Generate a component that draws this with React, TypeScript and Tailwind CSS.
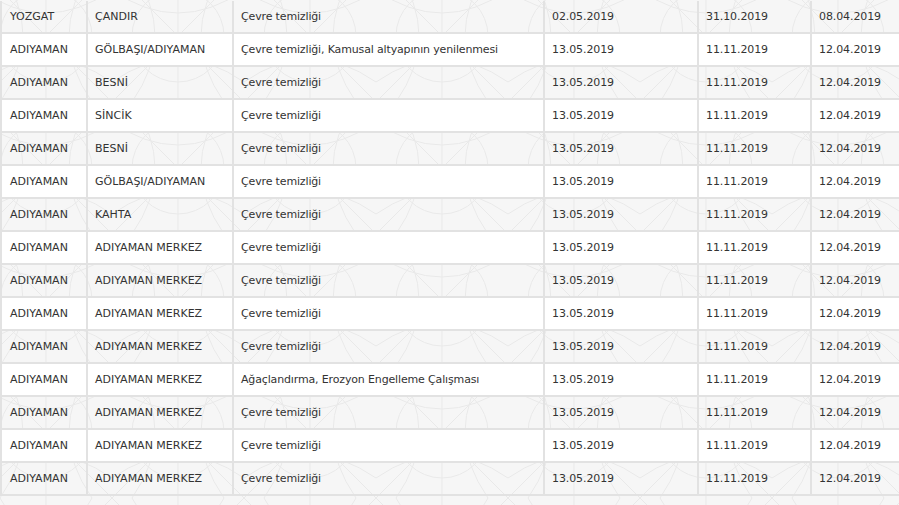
import React from 'react'

type Row = [string, string, string, string, string, string]

const ROWS: Row[] = [
  ['YOZGAT', 'ÇANDIR', 'Çevre temizliği', '02.05.2019', '31.10.2019', '08.04.2019'],
  ['ADIYAMAN', 'GÖLBAŞI/ADIYAMAN', 'Çevre temizliği, Kamusal altyapının yenilenmesi', '13.05.2019', '11.11.2019', '12.04.2019'],
  ['ADIYAMAN', 'BESNİ', 'Çevre temizliği', '13.05.2019', '11.11.2019', '12.04.2019'],
  ['ADIYAMAN', 'SİNCİK', 'Çevre temizliği', '13.05.2019', '11.11.2019', '12.04.2019'],
  ['ADIYAMAN', 'BESNİ', 'Çevre temizliği', '13.05.2019', '11.11.2019', '12.04.2019'],
  ['ADIYAMAN', 'GÖLBAŞI/ADIYAMAN', 'Çevre temizliği', '13.05.2019', '11.11.2019', '12.04.2019'],
  ['ADIYAMAN', 'KAHTA', 'Çevre temizliği', '13.05.2019', '11.11.2019', '12.04.2019'],
  ['ADIYAMAN', 'ADIYAMAN MERKEZ', 'Çevre temizliği', '13.05.2019', '11.11.2019', '12.04.2019'],
  ['ADIYAMAN', 'ADIYAMAN MERKEZ', 'Çevre temizliği', '13.05.2019', '11.11.2019', '12.04.2019'],
  ['ADIYAMAN', 'ADIYAMAN MERKEZ', 'Çevre temizliği', '13.05.2019', '11.11.2019', '12.04.2019'],
  ['ADIYAMAN', 'ADIYAMAN MERKEZ', 'Çevre temizliği', '13.05.2019', '11.11.2019', '12.04.2019'],
  ['ADIYAMAN', 'ADIYAMAN MERKEZ', 'Ağaçlandırma, Erozyon Engelleme Çalışması', '13.05.2019', '11.11.2019', '12.04.2019'],
  ['ADIYAMAN', 'ADIYAMAN MERKEZ', 'Çevre temizliği', '13.05.2019', '11.11.2019', '12.04.2019'],
  ['ADIYAMAN', 'ADIYAMAN MERKEZ', 'Çevre temizliği', '13.05.2019', '11.11.2019', '12.04.2019'],
  ['ADIYAMAN', 'ADIYAMAN MERKEZ', 'Çevre temizliği', '13.05.2019', '11.11.2019', '12.04.2019'],
]

const COL_CLASSES = [
  'w-[86px] pl-[8px]',
  'w-[146px] pl-[7px]',
  'w-[311px] pl-[7px] tracking-[-0.15px]',
  'w-[154px] pl-[7px] tracking-[-0.1px]',
  'w-[113px] pl-[7px] tracking-[-0.1px]',
  'flex-1 pl-[7px] tracking-[-0.1px]',
]

// faint arabesque-ish line pattern behind the table
function BgPattern() {
  return (
    <svg className="absolute inset-0 w-full h-full" xmlns="http://www.w3.org/2000/svg">
      <defs>
        <pattern id="geo" width="132" height="132" patternUnits="userSpaceOnUse" x="-20" y="-30">
          <g fill="none" stroke="#e9e9e9" strokeWidth="1">
            <path d="M0 0 L132 132 M132 0 L0 132" />
            <path d="M66 0 L66 132 M0 66 L132 66" />
            <circle cx="66" cy="66" r="46" />
            <path d="M0 20 Q66 66 132 20 M0 112 Q66 66 132 112" />
            <path d="M20 0 Q66 66 20 132 M112 0 Q66 66 112 132" />
          </g>
        </pattern>
      </defs>
      <rect width="100%" height="100%" fill="url(#geo)" />
    </svg>
  )
}

export default function App() {
  return (
    <div className="relative w-[899px] h-[505px] overflow-hidden bg-[#f6f6f6] text-[11px] text-[#333] font-['DejaVu_Sans',Verdana,sans-serif]">
      <BgPattern />
      <div className="relative flex flex-col pt-[1px]">
        {ROWS.map((row, i) => (
          <div
            key={i}
            className={`flex h-[33px] border-b-2 border-[#e2e2e2] ${i % 2 === 1 ? 'bg-white' : 'bg-transparent'}`}
          >
            {row.map((cell, j) => (
              <div
                key={j}
                className={`${COL_CLASSES[j]} shrink-0 flex items-center pt-[2px] border-l-2 border-[#e2e2e2] whitespace-nowrap`}
              >
                {cell}
              </div>
            ))}
          </div>
        ))}
      </div>
    </div>
  )
}
